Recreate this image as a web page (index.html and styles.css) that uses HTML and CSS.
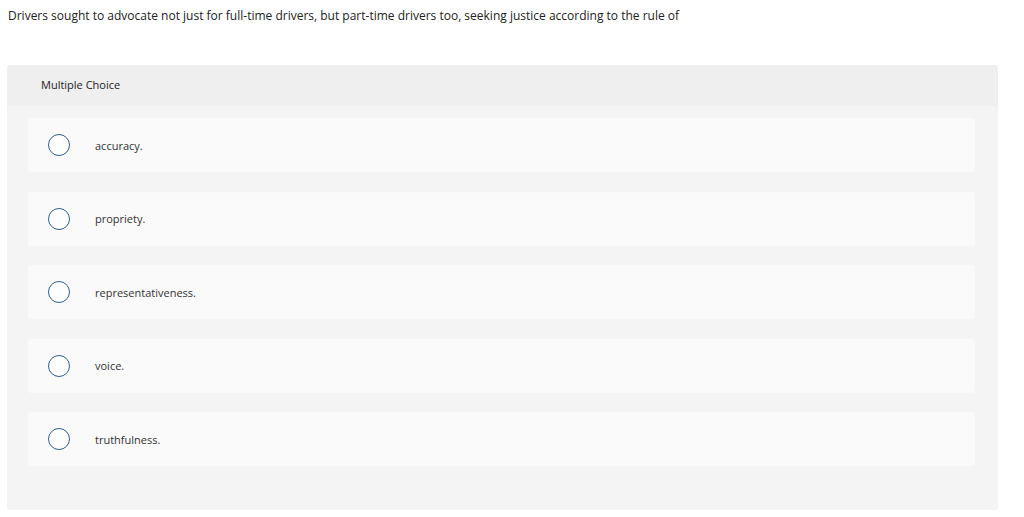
FILE: index.html
```html
<!DOCTYPE html>
<html lang="en">
<head>
  <meta charset="UTF-8">
  <title>Multiple Choice</title>
  <link rel="stylesheet" href="styles.css">
</head>
<body>
  <p class="question">Drivers sought to advocate not just for full-time drivers, but part-time drivers too, seeking justice according to the rule of</p>
  <div class="choice-box">
    <div class="choice-header">Multiple Choice</div>
    <div class="choice-list">
      <label class="option"><span class="radio"></span><span class="option-text">accuracy.</span></label>
      <label class="option"><span class="radio"></span><span class="option-text">propriety.</span></label>
      <label class="option"><span class="radio"></span><span class="option-text">representativeness.</span></label>
      <label class="option"><span class="radio"></span><span class="option-text">voice.</span></label>
      <label class="option"><span class="radio"></span><span class="option-text">truthfulness.</span></label>
    </div>
  </div>
</body>
</html>
```
FILE: styles.css
```css
body {
  margin: 0;
  padding: 0 26px 0 7px;
  background-color: #ffffff;
  font-family: "Open Sans", "Lato", sans-serif;
  color: #222;
}

.question {
  margin: 0;
  padding: 7px 0 0 1px;
  height: 65px;
  box-sizing: border-box;
  font-size: 12px;
  line-height: 17px;
}

.choice-box {
  background-color: #f4f4f4;
  border-radius: 3px;
  height: 445px;
}

.choice-header {
  background-color: #efefef;
  border-radius: 3px 3px 0 0;
  height: 41px;
  box-sizing: border-box;
  padding: 12px 0 0 34px;
  font-size: 11px;
  line-height: 15px;
}

.choice-list {
  display: flex;
  flex-direction: column;
  gap: 19.5px;
  padding: 12px 23px 0 21px;
}

.option {
  display: flex;
  align-items: center;
  height: 54px;
  background-color: #fafafa;
  border-radius: 3px;
  padding-left: 20px;
  cursor: pointer;
}

.radio {
  width: 20px;
  height: 20px;
  border: 1.5px solid #2d5f98;
  border-radius: 50%;
  background-color: #fff;
  flex-shrink: 0;
}

.option-text {
  margin-left: 25px;
  font-size: 11px;
  color: #333;
}
```
